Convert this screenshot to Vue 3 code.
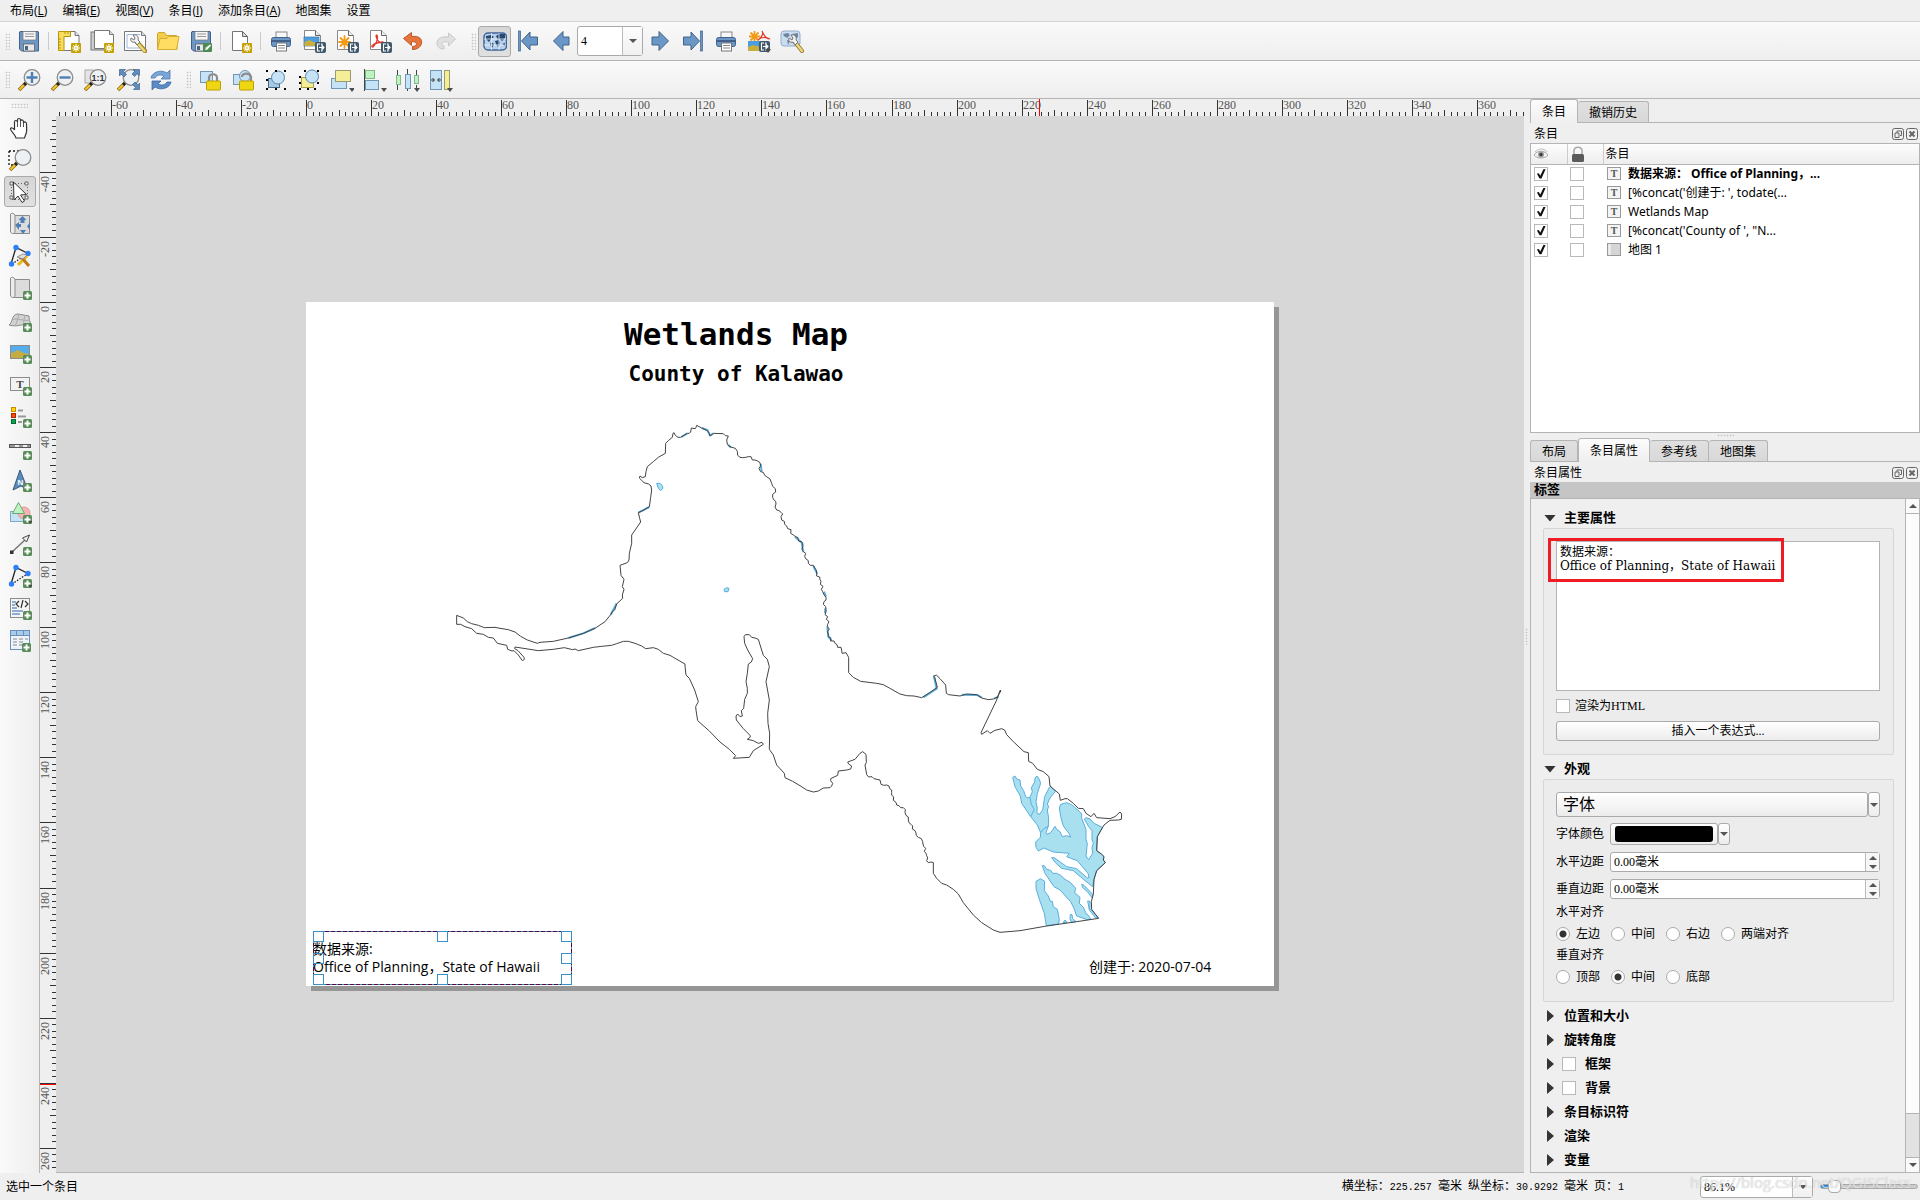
<template>
  <div class="window">
    <!-- shared icon shapes -->
    <svg class="sprite" aria-hidden="true">
      <symbol id="b-new" viewBox="0 0 10 10">
        <rect width="10" height="10" rx="1" fill="#c4a000" />
        <path d="M5 1v8M1 5h8M2.3 2.3l5.4 5.4M7.7 2.3L2.3 7.7" stroke="#fff" stroke-width="1.1" />
        <circle cx="5" cy="5" r="2" fill="#fff" /><circle cx="5" cy="5" r="1" fill="#e8d060" />
      </symbol>
      <symbol id="b-add" viewBox="0 0 9 9">
        <rect width="9" height="9" rx="1.5" fill="#5a8c5a" />
        <path d="M4.500 1.500v6M1.500 4.500h6" stroke="#fff" stroke-width="2" />
      </symbol>
      <symbol id="b-export" viewBox="0 0 11 11">
        <rect width="11" height="11" rx="2" fill="#415a6b" />
        <path d="M5 2H2.500v7H5M4 5.500h5M7 3.500l2 2-2 2M6 2h1v7H6" fill="none" stroke="#fff" stroke-width="1.100" />
      </symbol>
      <symbol id="b-drop" viewBox="0 0 6 4"><path d="M0 0h6L3 4z" fill="#4d4d4d" /></symbol>
      <symbol id="i-save" viewBox="0 0 24 24">
        <path d="M3 2.500h18l.5.5v19H4.500L2.500 20V3z" fill="#6d97c4" stroke="#41618a" />
        <rect x="6" y="2.500" width="13" height="8.500" fill="#f4f4f4" stroke="#777" stroke-width=".7" />
        <path d="M8 5h9M8 7.500h9" stroke="#999" />
        <rect x="6.500" y="15" width="11" height="7" fill="#e8e8e8" stroke="#555" stroke-width=".7" /><rect x="8" y="17" width="3" height="4" fill="#47668c" />
      </symbol>
      <symbol id="i-newlayout" viewBox="0 0 24 24">
        <path d="M6 2.500h12l4 4V21.500H6z" fill="#fff" stroke="#777" /><path d="M18 2.500v4h4" fill="#ddd" stroke="#777" />
        <path d="M1.500 2.500h12v5H7v14H1.500z" fill="#f5dd61" stroke="#b99505" />
        <path d="M2 10h2M2 13h2M2 16h2M2 19h2M8 3v2M11 3v2" stroke="#b99505" />
        <use href="#b-new" x="14" y="14" width="10" height="10" />
      </symbol>
      <symbol id="i-duplicate" viewBox="0 0 24 24">
        <rect x="1" y="3" width="17" height="18" fill="#ccc" stroke="#777" />
        <path d="M4.500 1.500h15l4 4v14h-19z" fill="#fff" stroke="#777" /><path d="M19.500 1.500v4h4" fill="#ddd" stroke="#777" />
        <use href="#b-new" x="14" y="14" width="10" height="10" />
      </symbol>
      <symbol id="i-manager" viewBox="0 0 24 24">
        <path d="M1.500 2.500h17l4 4v15h-21z" fill="#fff" stroke="#777" /><path d="M4 5.500h13M4 19h15M4 5.500V19" stroke="#9cb6dc" fill="none" /><path d="M18.500 2.500v4h4" fill="#ddd" stroke="#777" />
        <path d="M14 13l8 9" stroke="#a4862d" stroke-width="4.500" stroke-linecap="round" /><path d="M14.500 14l7 8" stroke="#edd87a" stroke-width="2.500" stroke-linecap="round" />
        <path d="M8 9l3 2 1-2-2-3c4-1 6 2 5 5l2 2-3 3-2-3c-3 1-5-1-4-4z" fill="#f2f2f2" stroke="#666" stroke-width=".9" />
      </symbol>
      <symbol id="i-open" viewBox="0 0 24 24">
        <path d="M1.500 20.500V4.500l1-1h6l2 3h10l.5 1v13z" fill="#f1cd49" stroke="#cfa62c" /><path d="M1.500 20.500l2.500-11h7l2-2h10l-2.500 13z" fill="#ffdd63" stroke="#d8ae33" />
      </symbol>
      <symbol id="i-saveas" viewBox="0 0 24 24">
        <use href="#i-save" width="24" height="24" /><rect x="14" y="14" width="9" height="9" rx="1" fill="#4e8a52" /><path d="M16 21l1-2.500 4-3 1 1-3.500 4z" fill="#fff" />
      </symbol>
      <symbol id="i-addpage" viewBox="0 0 24 24">
        <path d="M3.500 2.500h10l5 5v14h-15z" fill="#fff" stroke="#777" /><path d="M13.500 2.500v5h5z" fill="#ddd" stroke="#666" /><use href="#b-new" x="13" y="14" width="10" height="10" />
      </symbol>
      <symbol id="i-print" viewBox="0 0 24 24">
        <rect x="7" y="3" width="11" height="7" fill="#f8f8f8" stroke="#888" /><rect x="2.500" y="8.500" width="19" height="9" rx="2" fill="#6b97c6" stroke="#41618a" />
        <path d="M3 12h18" stroke="#41618a" stroke-width="2" /><rect x="7.500" y="14" width="10" height="8" fill="#fff" stroke="#777" /><path d="M9 16.500h7M9 19h7" stroke="#888" />
      </symbol>
      <symbol id="i-page" viewBox="0 0 24 24">
        <path d="M2.500 1.500h11l5 5v14h-16z" fill="#fff" stroke="#888" /><path d="M13.500 1.500v5h5" fill="#eee" stroke="#666" />
      </symbol>
      <symbol id="i-eximage" viewBox="0 0 24 24">
        <use href="#i-page" width="24" height="24" /><rect x="2" y="8" width="15" height="9" fill="#4b9fe0" stroke="#49739b" stroke-width=".7" />
        <path d="M2.500 17v-4l5-2 4 2 5 1v3z" fill="#c9ae3e" /><use href="#b-export" x="13" y="13" width="11" height="11" />
      </symbol>
      <symbol id="i-exsvg" viewBox="0 0 24 24">
        <use href="#i-page" width="24" height="24" />
        <path d="M9.500 7v12M4 13h11M5.500 9l8 8M13.500 9l-8 8" stroke="#f39b17" stroke-width="1.800" stroke-linecap="round" /><use href="#b-export" x="13" y="13" width="11" height="11" />
      </symbol>
      <symbol id="i-expdf" viewBox="0 0 24 24">
        <use href="#i-page" width="24" height="24" />
        <path d="M8 6c2 0 2 3 0 8l-3 4c-3 0 0-3 4-4l5-1c4 0 3 3-1 1-3-1-5-5-5-8" fill="none" stroke="#e43b2f" stroke-width="1.300" /><use href="#b-export" x="13" y="13" width="11" height="11" />
      </symbol>
      <symbol id="i-undo" viewBox="0 0 24 24">
        <path d="M2.500 9.500l8-6v4c8-1 11 3 10 7-1 4-5 6-9 6v-3c5 0 6-5-1-5v4z" fill="#e8743b" stroke="#b85a2b" />
      </symbol>
      <symbol id="i-redo" viewBox="0 0 24 24">
        <path d="M21.500 10l-7-6v4C7 7 3 10 3 14s3 6 7 6v-3c-4-1-3-5 4.500-4v4z" fill="#e0e0df" stroke="#c8c8c8" />
      </symbol>
      <symbol id="i-world" viewBox="0 0 24 24">
        <rect x="1" y="4" width="22.500" height="17" rx="4" fill="#b7d1ed" stroke="#3d649c" stroke-width="1.500" />
        <path d="M3 7l5-1 3 2-3 2-2 3-3-3zM8 13l3 2-2 4-2-3zM13 7l3-2h6v4l-3 3-2-2-2 1zM12 12l4-1 1 4-2 3-2-3zM19 15l3-1v3z" fill="#27486f" />
        <path d="M8.500 4v17M16 4v17M1 10h22M1 16h22" stroke="#e9f2fb" stroke-width=".8" />
      </symbol>
      <symbol id="i-prev" viewBox="0 0 24 24"><path d="M4.500 12L14 2.500V8h6v8h-6v5.500z" fill="#6b97c6" stroke="#41618a" /></symbol>
      <symbol id="i-next" viewBox="0 0 24 24"><path d="M20.500 12L11 2.500V8H4v8h7v5.500z" fill="#6b97c6" stroke="#41618a" /></symbol>
      <symbol id="i-first" viewBox="0 0 24 24"><rect x="2.500" y="2" width="2" height="20" fill="#6b97c6" stroke="#41618a" stroke-width=".7" /><path d="M5.500 12L14 3v5h7.500v8H14v5z" fill="#6b97c6" stroke="#41618a" /></symbol>
      <symbol id="i-last" viewBox="0 0 24 24"><rect x="19.500" y="2" width="2" height="20" fill="#6b97c6" stroke="#41618a" stroke-width=".7" /><path d="M18.500 12L10 3v5H2.500v8H10v5z" fill="#6b97c6" stroke="#41618a" /></symbol>
      <symbol id="i-exatlas" viewBox="0 0 24 24">
        <path d="M7.500 2v11M2 7.500h11M3.500 3.500l8 8M11.500 3.500l-8 8" stroke="#f39b17" stroke-width="1.800" /><path d="M15 2c2 3-1 7-4 9 3-3 8-3 12-1-4 0-6-3-8-8" fill="none" stroke="#e43b2f" stroke-width="1.200" />
        <rect x="1" y="12" width="13" height="10" fill="#4b9fe0" /><path d="M1 22v-4l5-2 8 2v4z" fill="#c9ae3e" /><use href="#b-export" x="12" y="12" width="11" height="11" /><use href="#b-drop" x="18" y="20" width="6" height="4" />
      </symbol>
      <symbol id="i-atlasset" viewBox="0 0 24 24">
        <g opacity=".65"><rect x="1" y="2" width="19" height="15" rx="3" fill="#b7d1ed" stroke="#5f86bb" /><path d="M3 5l5-1 2 2-3 3-3-2zM12 5l6-1v4l-4 3zM7 11l3 1-2 4z" fill="#27486f" /></g>
        <path d="M15 13l7 9" stroke="#8d7630" stroke-width="4" stroke-linecap="round" /><path d="M15 13l7 9" stroke="#edd87a" stroke-width="2.400" stroke-linecap="round" /><path d="M9 9l3 2 1-2-2-3c4-1 6 2 5 5l2 2-3 3-2-3c-3 1-5-1-4-4z" fill="#f2f2f2" stroke="#666" stroke-width=".9" />
      </symbol>
      <symbol id="i-lens" viewBox="0 0 24 24">
        <path d="M9 15l-7 7" stroke="#8a6a10" stroke-width="3.600" /><path d="M8 16l-5.500 5.500" stroke="#f6c52c" stroke-width="2" /><path d="M10 14l-3 3" stroke="#222" stroke-width="3" />
        <circle cx="15" cy="9.500" r="7.800" fill="#eef1f3" stroke="#8b8b8b" stroke-width="1.300" />
      </symbol>
      <symbol id="i-zoomin" viewBox="0 0 24 24"><use href="#i-lens" width="24" height="24" /><path d="M15 4v11M9.500 9.500h11" stroke="#4f7fb5" stroke-width="2.400" /></symbol>
      <symbol id="i-zoomout" viewBox="0 0 24 24"><use href="#i-lens" width="24" height="24" /><path d="M9.500 9.500h11" stroke="#4f7fb5" stroke-width="2.400" /></symbol>
      <symbol id="i-zoomone" viewBox="0 0 24 24"><rect x="2" y="2" width="8" height="13" fill="#e4e4e4" stroke="#aaa" /><use href="#i-lens" width="24" height="24" /><text x="15" y="13" font-size="9" font-weight="700" text-anchor="middle" fill="#333">1:1</text></symbol>
      <symbol id="i-zoomfull" viewBox="0 0 24 24">
        <use href="#i-lens" width="24" height="24" />
        <path d="M3.500 1.500h6l-2 2 3 3-2.500 2.500-3-3-1.500 2zM23.500 1.500v6l-2-2-3 3L16 6l3-3-2-1.500zM23.500 21.500h-6l2-2-3-3 2.500-2.500 3 3 1.500-2z" fill="#5e8dc0" stroke="#41618a" stroke-width=".7" />
      </symbol>
      <symbol id="i-refresh" viewBox="0 0 24 24">
        <path d="M2 10c1-6 10-9 16-5l3-3v9h-9l3-3c-4-2-7-1-9 2z" fill="#7aa7d8" stroke="#4b79ae" stroke-width=".8" /><path d="M22 14c-1 6-10 9-16 5l-3 3v-9h9l-3 3c4 2 7 1 9-2z" fill="#5b8cc6" stroke="#3c6ba3" stroke-width=".8" />
      </symbol>
      <symbol id="i-lock" viewBox="0 0 24 24">
        <rect x="2.500" y="3.500" width="12" height="11" fill="#c6e2f7" stroke="#7096b4" /><path d="M11 13V10c0-5 8-5 8 0v3" fill="none" stroke="#8d8d8d" stroke-width="2.200" /><rect x="8.500" y="13" width="14" height="9" rx="1" fill="#efd613" stroke="#bba000" />
      </symbol>
      <symbol id="i-unlock" viewBox="0 0 24 24">
        <rect x="2.500" y="6.500" width="11" height="10" fill="#c6e2f7" stroke="#7096b4" /><circle cx="14" cy="8" r="5.500" fill="#c6e2f7" stroke="#7096b4" /><path d="M11 9c0-4 8-5 9 0v4" fill="none" stroke="#8d8d8d" stroke-width="2.200" /><rect x="8.500" y="13" width="14" height="9" rx="1" fill="#efd613" stroke="#bba000" />
      </symbol>
      <symbol id="i-group" viewBox="0 0 24 24">
        <rect x="4.500" y="10.500" width="11" height="9" fill="#a8c8e0" stroke="#40688a" /><circle cx="14" cy="9.500" r="6.500" fill="#c6e2f7" stroke="#5b88ab" />
        <path d="M2 2h2v2H2zM11 2h2v2h-2zM20 2h2v2h-2zM2 20h2v2H2zM11 20h2v2h-2zM20 20h2v2h-2zM2 11h2v2H2z" />
      </symbol>
      <symbol id="i-ungroup" viewBox="0 0 24 24">
        <rect x="4.500" y="9.500" width="12" height="10" fill="#f4ee98" stroke="#aaa23d" /><circle cx="15" cy="8.500" r="6.500" fill="#c6e2f7" stroke="#5b88ab" />
        <path d="M7 2h2v2H7zM20 2h2v2h-2zM2 8h2v2H2zM2 20h2v2H2zM10 20h2v2h-2zM17 20h2v2h-2zM20 14h2v2h-2zM2 14h2v2H2z" />
      </symbol>
      <symbol id="i-raise" viewBox="0 0 24 24"><rect x="1.500" y="10.500" width="15" height="10" fill="#c6e2f7" stroke="#7096b4" /><rect x="5.500" y="2.500" width="15" height="11" fill="#f4ee98" stroke="#9d9a70" /><use href="#b-drop" x="19" y="20" width="6" height="4" /></symbol>
      <symbol id="i-align" viewBox="0 0 24 24"><path d="M1.500 1v22" stroke="#444" /><rect x="2.500" y="2.500" width="9" height="8" fill="#bdf3c2" stroke="#83b689" /><rect x="2.500" y="12.500" width="13" height="9" fill="#c6e2f7" stroke="#7096b4" /><use href="#b-drop" x="18" y="20" width="6" height="4" /></symbol>
      <symbol id="i-spread" viewBox="0 0 24 24"><path d="M1.500 2v6M11.500 1v6M20.500 2v6M1.500 17v5M11.500 20v3M20.500 17v3" stroke="#444" /><rect x=".5" y="7.500" width="4" height="9" fill="#bdf3c2" stroke="#83b689" /><rect x="9.500" y="6.500" width="5" height="14" fill="#c6e2f7" stroke="#7096b4" /><rect x="18.500" y="7.500" width="4" height="8" fill="#bdf3c2" stroke="#83b689" /><use href="#b-drop" x="18" y="20" width="6" height="4" /></symbol>
      <symbol id="i-resize" viewBox="0 0 24 24"><rect x="1.500" y="2.500" width="11" height="19" fill="#c6e2f7" stroke="#7096b4" /><rect x="15.500" y="2.500" width="5" height="19" fill="#f4ee98" stroke="#9d9a70" /><path d="M2 12h3M3.500 10l2 2-2 2M12 12H9M10.500 10l-2 2 2 2" fill="none" stroke="#333" /><use href="#b-drop" x="18" y="20" width="6" height="4" /></symbol>
      <symbol id="i-hand" viewBox="0 0 24 24">
        <path d="M8 22c-1-4-5-6-5.500-9 0-2 3-1 4 1V6c0-2 2.500-2 3 0V4c0-2 3-2 3 0v1c1-2 3-1 3 1v1c1-2 3-1 3 1 0 5 1 8-1 11l-1 3z" fill="#fff" stroke="#333" stroke-width="1.200" /><path d="M9.500 6v5M12.500 5v6M15.500 7v4" stroke="#555" />
      </symbol>
      <symbol id="i-zoom" viewBox="0 0 24 24"><path d="M1 3h14M1 3v14h10" fill="none" stroke="#111" stroke-width="1.300" stroke-dasharray="2 2" /><use href="#i-lens" width="24" height="24" /></symbol>
      <symbol id="i-select" viewBox="0 0 24 24">
        <path d="M4 3.500h14M4 19.500h14M3.500 4v14M19.500 4v14" stroke="#666" stroke-dasharray="1 2" /><path d="M2 2h3v3H2zM17 2h3v3h-3zM2 16h3v3H2zM17 16h3v3h-3z" fill="#eee" stroke="#666" />
        <path d="M5.500 2l13 12.500-6 .5 4 6-2.500 1.500-4-6.500-4 4z" fill="#fff" stroke="#333" />
      </symbol>
      <symbol id="i-map" viewBox="0 0 24 24"><path d="M5 3.500h16.500v18H5z" fill="#dcdcdc" stroke="#8b8b8b" /><path d="M2.500 2v18c1 2 4 2 4.500 0V3c-1-2-4-2-4.500-1z" fill="#ececec" stroke="#8b8b8b" /></symbol>
      <symbol id="i-move" viewBox="0 0 24 24"><use href="#i-map" width="24" height="24" /><path d="M14.500 4l4 4h-2v3h-4V8h-2zM7 13l4-3v2h2v3h-2v3zM22 10v8l-3-3.500zM12 18h6l-3 4z" fill="#4f7fb5" /></symbol>
      <symbol id="i-node" viewBox="0 0 24 24"><path d="M3 20L8 3.500l12 6" fill="none" stroke="#222" stroke-width="1.300" /><path d="M4 20L19 10" stroke="#222" stroke-width="1.300" stroke-dasharray="1.500 1.500" /><circle cx="8" cy="3.500" r="2.700" fill="#2d7ff9" /><circle cx="20" cy="9.500" r="2.700" fill="#2d7ff9" /><circle cx="3.500" cy="20" r="2.700" fill="#2d7ff9" /></symbol>
      <symbol id="i-editnode" viewBox="0 0 24 24"><use href="#i-node" width="24" height="24" /><path d="M10 21l9-9" stroke="#e9b91d" stroke-width="3" /><path d="M14 14l7 8" stroke="#bd7a18" stroke-width="3" /><path d="M9 13l6-3 4 1-4 4-3-1z" fill="#ddd" stroke="#777" stroke-width=".7" /></symbol>
      <symbol id="i-addmap" viewBox="0 0 24 24"><use href="#i-map" width="24" height="24" /><use href="#b-add" x="15" y="15" width="9" height="9" /></symbol>
      <symbol id="i-add3d" viewBox="0 0 24 24"><path d="M1 17c4-2 2-11 9-11l11 2c0 4 1 5 2 9-6-3-12 3-22 0z" fill="#d2d2d2" stroke="#8b8b8b" /><path d="M4 12c5-3 12 2 18 0M11 6c-1 4-2 8-4 12M17 7c-1 4-1 7-2 10" fill="none" stroke="#aaa" /><use href="#b-add" x="15" y="15" width="9" height="9" /></symbol>
      <symbol id="i-addimage" viewBox="0 0 24 24"><rect x="2.500" y="5.500" width="19" height="13" fill="#56adeb" stroke="#8b8b8b" /><path d="M3 18v-5l7-3 6 3 5 1v4z" fill="#c4ac42" /><use href="#b-add" x="15" y="15" width="9" height="9" /></symbol>
      <symbol id="i-addlabel" viewBox="0 0 24 24"><rect x="2.500" y="5.500" width="19" height="13" fill="#f2f2f2" stroke="#8b8b8b" /><text x="12" y="16" font-family="Liberation Serif, serif" font-size="11" font-weight="700" text-anchor="middle" fill="#444">T</text><use href="#b-add" x="15" y="15" width="9" height="9" /></symbol>
      <symbol id="i-addlegend" viewBox="0 0 24 24"><rect x="3.500" y="3.500" width="4" height="4" fill="#ffd500" stroke="#c98b00" /><rect x="3.500" y="9.500" width="4" height="4" fill="#ff4a0b" stroke="#a52a00" /><rect x="3.500" y="15.500" width="4" height="4" fill="#08a551" stroke="#046a32" /><path d="M10 6.500h5M10 12.500h8M10 18h4" stroke="#999" stroke-width="2" /><use href="#b-add" x="15" y="15" width="9" height="9" /></symbol>
      <symbol id="i-addscale" viewBox="0 0 24 24"><rect x="1.500" y="8.500" width="21" height="3" fill="#eee" stroke="#555" /><path d="M2 10h5M11 10h4M19 10h3" stroke="#999" stroke-width="2" /><use href="#b-add" x="15" y="15" width="9" height="9" /></symbol>
      <symbol id="i-addnorth" viewBox="0 0 24 24"><path d="M12 2l8 20-7-4-8 4z" fill="#5d8cba" stroke="#38597f" /><text x="12.500" y="17" font-size="8" font-weight="700" text-anchor="middle" fill="#fff">N</text><use href="#b-add" x="15" y="15" width="9" height="9" /></symbol>
      <symbol id="i-addshape" viewBox="0 0 24 24"><rect x="2.500" y="11.500" width="14" height="10" fill="#c6e2f7" stroke="#7fa9c8" /><circle cx="16" cy="13" r="6" fill="#f7b3b0" stroke="#d99" /><path d="M10.500 2.500l6 11H4.500z" fill="#bdf3c2" stroke="#6ca873" /><use href="#b-add" x="15" y="15" width="9" height="9" /><use href="#b-drop" x="20" y="21" width="5" height="3" /></symbol>
      <symbol id="i-addarrow" viewBox="0 0 24 24"><path d="M4 20L18 7" stroke="#777" stroke-width="1.500" /><path d="M21.500 3l-7 3 4 4z" fill="#eee" stroke="#444" /><rect x="2" y="18.500" width="3.500" height="3.500" fill="#333" /><use href="#b-add" x="15" y="15" width="9" height="9" /></symbol>
      <symbol id="i-addnode" viewBox="0 0 24 24"><use href="#i-node" width="24" height="24" /><use href="#b-add" x="15" y="15" width="9" height="9" /><use href="#b-drop" x="20" y="21" width="5" height="3" /></symbol>
      <symbol id="i-addhtml" viewBox="0 0 24 24"><rect x="2.500" y="2.500" width="19" height="19" fill="#f5f5f5" stroke="#8b8b8b" /><path d="M4 6h4M4 9h3M4 12h5M4 15h11M4 18h8" stroke="#6b97c6" stroke-width="1.600" /><path d="M11 5l-3 3 3 3M17 5l3 3-3 3M15 4l-2 8" fill="none" stroke="#333" stroke-width="1.200" /><use href="#b-add" x="15" y="15" width="9" height="9" /></symbol>
      <symbol id="i-addtable" viewBox="0 0 24 24"><rect x="2.500" y="2.500" width="19" height="19" fill="#eef4fa" stroke="#6790bc" /><path d="M3 5h18" stroke="#a9cbea" stroke-width="4" /><path d="M3 7.500h18M8.500 3v4M15.500 3v4" stroke="#6790bc" /><path d="M5 11h4M11 11h4M17 11h3M5 14h4M11 14h4M5 17h4M11 17h3" stroke="#888" /><use href="#b-add" x="14" y="15" width="9" height="9" /></symbol>
    </svg>

    <nav class="menubar">
      <button v-for="m in menus" :key="m.text" type="button">{{ m.text }}<template v-if="m.key">(<u>{{ m.key }}</u>)</template></button>
    </nav>

    <div class="toolbar">
      <div class="bar-group">
        <i class="grip"></i>
        <template v-for="(icon, i) in fileTools" :key="i">
          <i v-if="icon === '|'" class="sep"></i>
          <button v-else type="button" class="tool" :aria-label="icon"><svg><use :href="'#i-' + icon" /></svg></button>
        </template>
      </div>
      <div class="bar-group">
        <i class="grip"></i>
        <button v-for="icon in ['world', 'first', 'prev']" :key="icon" type="button" class="tool" :class="{ active: icon === 'world' }" :aria-label="icon"><svg><use :href="'#i-' + icon" /></svg></button>
        <span class="combo page-combo">
          <select v-model="atlasPage" aria-label="page"><option>4</option></select>
          <i class="combo-arrow"></i>
        </span>
        <button v-for="icon in ['next', 'last', 'print', 'exatlas', 'atlasset']" :key="icon" type="button" class="tool" :aria-label="icon"><svg><use :href="'#i-' + icon" /></svg></button>
      </div>
    </div>
    <div class="toolbar">
      <div v-for="(group, g) in viewTools" :key="g" class="bar-group">
        <i class="grip"></i>
        <button v-for="icon in group" :key="icon" type="button" class="tool" :aria-label="icon"><svg><use :href="'#i-' + icon" /></svg></button>
      </div>
    </div>

    <div class="body">
      <aside class="toolbox">
        <i class="grip flat"></i>
        <button v-for="icon in boxTools" :key="icon" type="button" class="tool" :class="{ active: icon === 'select' }" :aria-label="icon"><svg><use :href="'#i-' + icon" /></svg></button>
      </aside>

      <main class="view">
        <svg class="ruler-h">
          <path :d="hPath" />
          <text v-for="t in hLabels" :key="t.mm" :x="t.pos + 1" y="10">{{ t.mm }}</text>
          <path class="cursor" d="M983.500 0v17" />
        </svg>
        <svg class="ruler-v">
          <path :d="vPath" />
          <text v-for="t in vLabels" :key="t.mm" :transform="`translate(9 ${t.pos + 4}) rotate(-90)`" text-anchor="end">{{ t.mm }}</text>
          <path class="cursor" d="M0 968.500h16" />
        </svg>
        <div class="canvas">
          <div class="page">
            <svg class="map" viewBox="-402 -324 2904 2052">
              <g class="wet">
                <polygon v-for="(w, i) in wetlands" :key="i" :points="w" />
                <path class="seam" d="M1770 1162l4 22 9 14-11 22M1802 1268l10-12 14-8" />
                <path class="shore" d="M385 684l45-14 35-16M512 614l18-34M595 308l33-17M742 70l-18 11M785 54l17 6 8 16 10-5M865 104l8 9M962 162l3 22M1065 380l20 18 5 28M1120 468l12 24M1152 545l6 15M1156 595l-1 14M1162 650l3 30 10 12M1450 862l40-26-8-36M1566 854l46 1 14 8M1662 866l14-6" />
              </g>
              <polyline v-for="(c, i) in coast" :key="i" class="outline" :points="c" />
            </svg>
            <div class="label title">Wetlands Map</div>
            <div class="label subtitle">County of Kalawao</div>
            <div class="label created">创建于: 2020-07-04</div>
            <div class="label source">
              数据来源:<br />Office of Planning，State of Hawaii
              <svg class="handles">
                <rect width="258" height="53" />
                <rect class="dash" width="258" height="53" />
                <rect v-for="h in handles" :key="h.x + '-' + h.y" :x="h.x" :y="h.y" width="10" height="10" />
              </svg>
            </div>
          </div>
        </div>
      </main>

      <i class="grip split-v"></i>

      <aside class="docks">
        <section class="dock">
          <div class="tabs">
            <button type="button" class="tab on">条目</button>
            <button type="button" class="tab">撤销历史</button>
          </div>
          <header class="dock-title">条目
            <span class="dock-btns">
              <button type="button" aria-label="float"><svg viewBox="0 0 12 12"><rect x=".5" y=".5" width="11" height="11" rx="2" /><path d="M5 5V3h4.500v4.500H8M3 5h4v4.500H3z" /></svg></button>
              <button type="button" aria-label="close"><svg viewBox="0 0 12 12"><rect x=".5" y=".5" width="11" height="11" rx="2" /><path class="thick" d="M3.500 3.500l5 5M8.500 3.500l-5 5" /></svg></button>
            </span>
          </header>
          <div class="tree">
            <table>
              <thead>
                <tr>
                  <th class="narrow"><svg class="head-icon" viewBox="0 0 16 16"><path d="M1 9c3-5 11-5 14 0-3 4-11 4-14 0z" fill="#f2f2f2" stroke="#aaa" /><path d="M2 6c4-4 9-4 12 0" fill="none" stroke="#bbb" /><circle cx="8" cy="8.500" r="3" fill="#999" /><circle cx="8" cy="8.500" r="1.500" fill="#333" /></svg></th>
                  <th class="narrow"><svg class="head-icon" viewBox="0 0 16 16"><path d="M4 9V5c0-5 8-5 8 0v4" fill="none" stroke="#aaa" stroke-width="1.600" /><rect x="2" y="8" width="12" height="8" rx="1.500" fill="#5b5b5b" /></svg></th>
                  <th>条目</th>
                </tr>
              </thead>
              <tbody>
                <tr v-for="(item, i) in items" :key="i" :class="{ current: i === 0 }">
                  <td><input v-model="item.visible" type="checkbox" class="check" :aria-label="'visible ' + item.name" /></td>
                  <td><input v-model="item.locked" type="checkbox" class="check" :aria-label="'locked ' + item.name" /></td>
                  <td>
                    <div class="item-name">
                      <svg viewBox="0 0 14 13">
                        <template v-if="item.type === 'label'"><rect x=".5" y=".5" width="13" height="12" fill="#f4f4f4" stroke="#999" /><text x="7" y="10" font-family="Liberation Serif, serif" font-size="10" font-weight="700" text-anchor="middle" fill="#555">T</text></template>
                        <template v-else><rect x=".5" y=".5" width="13" height="12" fill="#d5d5d5" stroke="#999" /><path d="M2.500 1v11" stroke="#f4f4f4" stroke-width="2" /></template>
                      </svg>
                      <span>{{ item.name }}</span>
                    </div>
                  </td>
                </tr>
              </tbody>
            </table>
          </div>
        </section>
        <i class="grip flat split-h"></i>
        <section class="dock props">
          <div class="tabs">
            <button v-for="t in ['布局', '条目属性', '参考线', '地图集']" :key="t" type="button" class="tab" :class="{ on: t === '条目属性' }">{{ t }}</button>
          </div>
          <header class="dock-title">条目属性
            <span class="dock-btns">
              <button type="button" aria-label="float"><svg viewBox="0 0 12 12"><rect x=".5" y=".5" width="11" height="11" rx="2" /><path d="M5 5V3h4.500v4.500H8M3 5h4v4.500H3z" /></svg></button>
              <button type="button" aria-label="close"><svg viewBox="0 0 12 12"><rect x=".5" y=".5" width="11" height="11" rx="2" /><path class="thick" d="M3.500 3.500l5 5M8.500 3.500l-5 5" /></svg></button>
            </span>
          </header>
          <h2 class="caption">标签</h2>
          <div class="scroll">
            <div class="form">
              <button type="button" class="fold open">主要属性</button>
              <div class="box">
                <textarea v-model="source" aria-label="主要属性" spellcheck="false"></textarea>
                <i class="mark"></i>
                <label class="tick"><input v-model="html" type="checkbox" class="check" />渲染为HTML</label>
                <button type="button" class="push">插入一个表达式...</button>
              </div>
              <button type="button" class="fold open">外观</button>
              <div class="box look">
                <div class="split font">
                  <button type="button" class="push">字体</button>
                  <button type="button" class="push arrow" aria-label="字体菜单"></button>
                </div>
                <div class="row color">
                  <label for="color">字体颜色</label>
                  <div class="split">
                    <button id="color" type="button" class="push swatch"><i></i></button>
                    <button type="button" class="push arrow" aria-label="颜色菜单"></button>
                  </div>
                </div>
                <div v-for="m in margins" :key="m.id" class="row">
                  <label :for="m.id">{{ m.label }}</label>
                  <div class="spin">
                    <input :id="m.id" v-model="m.value" type="text" />
                    <span><button type="button" class="up" aria-label="增加"></button><button type="button" class="down" aria-label="减少"></button></span>
                  </div>
                </div>
                <template v-for="a in aligns" :key="a.id">
                  <div class="line">{{ a.label }}</div>
                  <div class="radios">
                    <label v-for="o in a.options" :key="o"><input v-model="a.value" type="radio" :name="a.id" :value="o" />{{ o }}</label>
                  </div>
                </template>
              </div>
              <div v-for="s in sections" :key="s.text" class="folded">
                <button type="button" class="fold" :aria-label="s.text"></button>
                <label v-if="s.check"><input type="checkbox" class="check" />{{ s.text }}</label>
                <span v-else>{{ s.text }}</span>
              </div>
            </div>
            <div class="vbar">
              <button type="button" class="up" aria-label="up"></button>
              <i class="thumb"></i>
              <i class="groove"></i>
              <button type="button" class="down" aria-label="down"></button>
            </div>
          </div>
        </section>
      </aside>
    </div>

    <footer class="status">
      <span class="hint">选中一个条目</span>
      <span class="coords">横坐标：<b>225.257&nbsp;</b>毫米<b>&nbsp;</b>纵坐标：<b>30.9292&nbsp;</b>毫米<b>&nbsp;</b>页：<b>1</b></span>
      <span class="combo zoom-combo">
        <select v-model="zoom" aria-label="zoom"><option>86.1%</option></select>
        <i class="combo-arrow"></i>
      </span>
      <input v-model="slider" class="slider" type="range" min="0" max="100" aria-label="zoom slider" />
      <span class="watermark">https://blog.csdn.net/QGISClass</span>
    </footer>
  </div>
</template>

<script setup>
import { ref, reactive } from 'vue'

const menus = [
  { text: '布局', key: 'L' },
  { text: '编辑', key: 'E' },
  { text: '视图', key: 'V' },
  { text: '条目', key: 'I' },
  { text: '添加条目', key: 'A' },
  { text: '地图集' },
  { text: '设置' }
]

const fileTools = ['save', '|', 'newlayout', 'duplicate', 'manager', 'open', 'saveas', '|', 'addpage', '|', 'print', 'eximage', 'exsvg', 'expdf', 'undo', 'redo']
const viewTools = [
  ['zoomin', 'zoomout', 'zoomone', 'zoomfull', 'refresh'],
  ['lock', 'unlock', 'group', 'ungroup', 'raise', 'align', 'spread', 'resize']
]
const boxTools = ['hand', 'zoom', 'select', 'move', 'editnode', 'addmap', 'add3d', 'addimage', 'addlabel', 'addlegend', 'addscale', 'addnorth', 'addshape', 'addarrow', 'addnode', 'addhtml', 'addtable']

const atlasPage = ref('4')
const zoom = ref('86.1%')
const slider = ref(9)
const html = ref(false)
const source = ref('数据来源：\nOffice of Planning，State of Hawaii')

const items = reactive([
  { name: '数据来源： Office of Planning，...', type: 'label', visible: true, locked: false },
  { name: "[%concat('创建于: ', todate(...", type: 'label', visible: true, locked: false },
  { name: 'Wetlands Map', type: 'label', visible: true, locked: false },
  { name: "[%concat('County of ', \"N...", type: 'label', visible: true, locked: false },
  { name: '地图 1', type: 'map', visible: true, locked: false }
])

const margins = reactive([
  { id: 'mx', label: '水平边距', value: '0.00毫米' },
  { id: 'my', label: '垂直边距', value: '0.00毫米' }
])

const aligns = reactive([
  { id: 'ah', label: '水平对齐', value: '左边', options: ['左边', '中间', '右边', '两端对齐'] },
  { id: 'av', label: '垂直对齐', value: '中间', options: ['顶部', '中间', '底部'] }
])

const sections = [
  { text: '位置和大小' },
  { text: '旋转角度' },
  { text: '框架', check: true },
  { text: '背景', check: true },
  { text: '条目标识符' },
  { text: '渲染' },
  { text: '变量' }
]

const handles = [0, 124, 248].flatMap(x => [0, 22, 43].map(y => ({ x, y })))
  .filter(h => !(h.x === 124 && h.y === 22))

// pixels per millimetre at the current zoom
const scale = 3.2528

function ticks(origin, from, to) {
  const out = []
  for (let mm = from; mm <= to; mm += 2) {
    out.push({ mm, pos: Math.round(origin + mm * scale) })
  }
  return out
}

function tickLength(mm, full) {
  if (mm % 20 === 0) return full
  return mm % 10 === 0 ? 6 : 4
}

const hTicks = ticks(250, -76, 374)
const vTicks = ticks(186, -56, 266)
const hPath = hTicks.map(t => `M${t.pos + 0.5} 17v-${tickLength(t.mm, 16)}`).join('')
const vPath = vTicks.map(t => `M16 ${t.pos + 0.5}h-${tickLength(t.mm, 16)}`).join('')
const hLabels = hTicks.filter(t => t.mm % 20 === 0)
const vLabels = vTicks.filter(t => t.mm % 20 === 0)

// "x,y x,y ..." moved by dx, dy; rough adds a small zigzag between the points
function trace(str, dx = 0, dy = 0, rough = 0) {
  const pts = str.trim().split(/\s+/).map(p => p.split(',').map(Number)).map(([x, y]) => [x + dx, y + dy])
  if (!rough) return pts.join(' ')
  const out = []
  let n = 0
  pts.forEach(([x, y], i) => {
    out.push([x, y])
    const next = pts[i + 1]
    if (!next) return
    const len = Math.hypot(next[0] - x, next[1] - y)
    const steps = Math.floor(len / 7)
    for (let s = 1; s < steps; s++) {
      const k = s / steps
      const side = Math.sin(++n * 2.3) * rough
      out.push([
        Math.round(x + (next[0] - x) * k - (next[1] - y) / len * side),
        Math.round(y + (next[1] - y) * k + (next[0] - x) / len * side)
      ])
    }
  })
  return out.join(' ')
}

const coast = [
  // west tip and the peninsula
  trace(`50,643 50,616 70,624 82,635 95,641 115,646 133,653 165,652 180,655 205,659 225,666 242,679 262,690 292,700 300,697 340,694 385,684
    430,670 465,655 495,635 512,614 518,604 524,600 530,582 548,565 547,555 552,538 547,530 552,508 543,496 540,466 562,458 567,450 568,430 575,400 575,375
    602,336 599,325 595,308 612,300 628,290 632,262 635,240 633,228 626,222 612,218 598,204 600,198 607,203 616,200 618,185 622,170 640,155 655,142
    676,130 677,100 685,92 697,82 699,70 702,68 706,76 714,82 722,82 742,70 748,70 752,66 754,54 766,56 768,52 770,46 785,54 802,62 808,70 810,78 820,70 850,71 856,77 865,78`),
  // north-east shore
  trace(`865,78 860,90 862,102 876,112 892,124 893,136 908,143 925,140 945,150 960,158 962,185 980,200 990,207 995,220 1006,236 998,262
    1008,282 1010,300 1028,312 1025,330 1040,348 1060,375 1085,395 1090,425 1105,460 1120,466 1130,490 1143,515 1148,545 1158,562 1152,575 1158,606 1155,614 1163,620 1165,680 1185,700 1205,720 1206,730 1218,728`, 0, 0, 4),
  trace(`138,638 146,652 146,698 160,712 182,724 230,730 250,734 268,744 300,762 320,767 342,768 365,773 392,756 412,742 404,712 400,708 410,706 420,716 437,735 439,760
    446,764 480,768 500,762 530,764 545,774 565,779 580,777 592,771 603,752 600,751 590,780 543,878 545,883 562,872 570,880 585,871 605,866 614,870 620,884 640,905 672,935 685,938 686,964
    698,970 712,988 730,995 747,1010 750,1038 778,1062 781,1081 795,1076 802,1076 820,1090 835,1105 850,1106 858,1120 873,1130 882,1120 890,1133 930,1136 945,1130 960,1116 965,1122 964,1138 955,1140 930,1141
    912,1155 892,1190 890,1232 904,1242 912,1250 910,1260 916,1268 890,1292 882,1318 880,1362 874,1385 875,1408 896,1435 830,1445 740,1458 660,1472 600,1477
    580,1470 545,1448 520,1425 490,1388 475,1362 460,1348 440,1335 425,1330 410,1315 400,1300 400,1268`, 1080, 90),
  trace(`400,1268 385,1268 378,1240 368,1205 355,1192 325,1140 310,1103 290,1095 275,1065 275,1050 260,1035 243,1033 240,1020 222,1016 200,1004`, 1080, 90, 3),
  trace(`200,1004 195,975 199,968 198,943 188,935 180,940 165,958 143,966 146,972 155,978 152,987 140,990 115,993 113,1006 92,1016 92,1022 98,1030 95,1038 90,1043 70,1044
    55,1053 40,1056 20,1050 0,1037 -22,1024 -45,1013 -47,1000 -70,975 -80,945 -92,928 -91,880 -96,850 -97,820 -92,780 -102,725 -92,680 -98,658 -110,646 -125,598 -135,594`, 1080, 90),
  // inner valley and the south shore
  trace(`945,684 935,682 928,674 916,674 912,680 914,700 923,720 938,746 934,756 925,762 922,790 918,815 922,835 922,850 914,868 911,895 904,902 907,918 900,920 893,912 888,918 889,930 910,956 930,976 931,981 922,988
    940,992 955,1000 966,997 970,1003 940,1022 928,1042 880,1045 887,1037 868,1018 840,996 808,963 773,932 768,900 767,890 775,875 764,840 748,805 738,795 735,768 735,762 700,742 690,736 670,730 655,718 640,713 617,716
    605,708 585,700 565,694 550,694 530,701 515,706 485,709 460,712 415,722 405,717 398,719 373,713 340,718 295,722 225,711 224,716 234,722 252,742 253,748 247,752 235,735 222,722 216,723 203,718 200,706 172,700 160,684 145,682 130,673 110,670 95,656 75,650 62,643 50,643`)
]

const wetlands = [
  trace('650,220 660,220 666,226 669,234 662,242 655,235'),
  trace('852,538 860,533 867,535 864,545 854,545'),
  ...[
    `638,1012 645,1008 650,1017 660,1020 662,1038 671,1052 677,1070 684,1074 691,1070 697,1055 694,1043 704,1026 705,1014 711,1008 718,1018 722,1030 712,1060 708,1085 712,1105 710,1118 718,1123
      728,1110 734,1070 748,1042 752,1040 766,1054 750,1074 742,1092 746,1100 742,1110 746,1135 745,1158 738,1178 741,1183 752,1178 765,1159 770,1168 780,1175 787,1190 800,1187 812,1191 808,1182 790,1158 782,1130 778,1104 782,1093 800,1088 815,1094 838,1114
      845,1122 845,1135 858,1168 858,1200 862,1210 858,1248 866,1259 878,1240 876,1222 880,1210 876,1198 876,1172 866,1160 853,1137 858,1133 870,1137 882,1150 907,1162 892,1190 890,1232 904,1242 912,1250 910,1260 916,1268 890,1292 882,1318 878,1340 850,1318
      820,1292 785,1285 766,1268 755,1253 762,1253 778,1264 800,1280 830,1286 862,1314 867,1312 864,1300 832,1262 815,1256 800,1250 808,1240 760,1236 732,1224 715,1233 708,1222 707,1206 721,1192 722,1178 712,1155 692,1130 684,1118 665,1090 661,1068 645,1040`,
    '727,1277 733,1277 740,1288 752,1291 758,1300 770,1300 782,1306 795,1318 812,1328 827,1345 824,1358 840,1372 838,1390 850,1402 857,1418 868,1430 872,1438 862,1439 830,1428 822,1405 812,1385 780,1350 762,1340 735,1300',
    '708,1324 722,1316 734,1324 733,1352 745,1368 751,1384 757,1384 760,1400 772,1408 778,1438 776,1452 739,1457 733,1420 718,1378 708,1345',
    '845,1333 852,1336 878,1363 876,1373 862,1355 848,1343',
    '863,1383 870,1384 870,1406 894,1433 887,1434 868,1410',
    '811,1423 816,1424 818,1436 828,1445 814,1447 810,1436',
    '789,1448 795,1440 801,1447'
  ].map(s => trace(s, 1080, 90))
]
</script>

<style>
body {
  margin: 0;
}
</style>

<style scoped>
.window {
  display: flex;
  flex-direction: column;
  height: 100vh;
  overflow: hidden;
  background: #efefef;
  color: #000;
  font: 12px/16px "Liberation Serif", "Noto Sans CJK SC", sans-serif;
}

* {
  box-sizing: border-box;
}

button,
input,
select,
textarea {
  margin: 0;
  padding: 0;
  border: 0;
  border-radius: 0;
  background: none;
  color: inherit;
  font: inherit;
  outline: none;
}

.sprite {
  display: none;
}

.menubar {
  display: flex;
  flex: none;
  gap: 15px;
  height: 22px;
  padding: 0 10px;
  border-bottom: 1px solid #d3d3d3;
  font-family: "Open Sans", "Noto Sans CJK SC", sans-serif;
}

.toolbar {
  display: flex;
  flex: none;
  gap: 4px;
  height: 39px;
  border-bottom: 1px solid #b4b4b4;
  background: linear-gradient(#fafafa, #eee);
}

.toolbar + .toolbar {
  height: 38px;
}

.bar-group {
  display: flex;
  align-items: center;
}

.grip {
  flex: none;
  width: 5px;
  height: 17px;
  margin: 0 2px 0 5px;
  background: radial-gradient(#c4c4c4 40%, transparent 50%) 0 0 / 3px 3px;
}

.grip.flat {
  width: 17px;
  height: 5px;
}

.sep {
  width: 1px;
  height: 18px;
  margin: 0 3px;
  background: #ccc;
}

.tool {
  display: flex;
  flex: none;
  align-items: center;
  justify-content: center;
  width: 33px;
  height: 31px;
  border: 1px solid transparent;
  border-radius: 3px;
  font-family: "Liberation Sans", sans-serif;
}

.tool.active {
  border-color: #aaa;
  background: linear-gradient(#d6d6d6, #e0e0e0);
}

.tool svg {
  width: 24px;
  height: 24px;
}

.combo {
  display: flex;
  border: 1px solid #aaa;
  border-radius: 3px;
  background: #fff;
}

.combo select {
  flex: 1;
  min-width: 0;
  padding-left: 3px;
  appearance: none;
}

.combo-arrow {
  display: flex;
  align-items: center;
  justify-content: center;
  width: 20px;
  border-left: 1px solid #bbb;
  background: linear-gradient(#fdfdfd, #f0f0f0);
}

.combo-arrow::after,
.arrow::after,
.down::after {
  content: "";
  border: 4px solid transparent;
  border-top-color: #555;
  border-bottom: 0;
}

.up::after {
  content: "";
  border: 4px solid transparent;
  border-bottom-color: #555;
  border-top: 0;
}

.page-combo {
  width: 66px;
  height: 30px;
}

.body {
  display: flex;
  flex: 1;
  min-height: 0;
}

.toolbox {
  display: flex;
  flex: none;
  flex-direction: column;
  align-items: center;
  gap: 1px;
  width: 40px;
  padding-top: 4px;
  border-right: 1px solid #b4b4b4;
  background: linear-gradient(90deg, #fafafa, #eee);
}

.toolbox .grip {
  margin: 0 0 3px;
}

.toolbox .tool {
  width: 32px;
}

.view {
  display: grid;
  flex: 1;
  grid-template: 17px 1fr / 16px 1fr;
  min-width: 0;
}

.ruler-h,
.ruler-v {
  width: 100%;
  height: 100%;
  fill: #555;
  stroke: #333;
  shape-rendering: crispEdges;
}

.ruler-h {
  grid-column: 2;
}

.ruler-v {
  grid-row: 2;
}

.view text {
  stroke: none;
}

.view .cursor {
  stroke: #f00;
}

.canvas {
  display: flex;
  align-items: center;
  justify-content: center;
  min-width: 0;
  min-height: 0;
  border-bottom: 1px solid #b4b4b4;
  background: #d7d7d7;
}

.page {
  position: relative;
  flex: none;
  width: 968px;
  height: 684px;
  background: #fff;
  box-shadow: 5px 5px 0 #969696;
}

.map {
  display: block;
  width: 100%;
  height: 100%;
}

.outline {
  fill: none;
  stroke: #444;
  stroke-width: 3;
  stroke-linejoin: round;
}

.wet {
  fill: #a8e0ef;
  stroke: #5aaede;
  stroke-width: 3;
  stroke-linejoin: round;
}

.wet .seam {
  fill: none;
}

.wet .shore {
  fill: none;
  stroke-width: 6;
}

.label {
  position: absolute;
  white-space: nowrap;
}

.title,
.subtitle {
  left: 0;
  width: 860px;
  text-align: center;
  font-family: "DejaVu Sans Mono", monospace;
  font-weight: 700;
}

.title {
  top: 12px;
  font-size: 31px;
  line-height: 40px;
}

.subtitle {
  top: 58px;
  font-size: 21px;
  line-height: 28px;
}

.created,
.source {
  font: 14px/18px "Open Sans", "Noto Sans CJK SC", sans-serif;
}

.created {
  top: 656px;
  left: 783px;
}

.source {
  top: 629px;
  left: 7px;
  width: 260px;
  height: 55px;
  padding-top: 9px;
}

.handles {
  position: absolute;
  inset: 0;
  width: 260px;
  height: 55px;
  overflow: visible;
  fill: none;
  stroke: #3b8fc7;
  shape-rendering: crispEdges;
}

.handles .dash {
  stroke: #5a0838;
  stroke-dasharray: 4 2;
}

.split-v {
  align-self: center;
  margin: 0 0 0 1px;
  width: 3px;
}

.docks {
  display: flex;
  flex: none;
  flex-direction: column;
  width: 392px;
  padding-left: 2px;
}

.tabs {
  display: flex;
  align-items: flex-end;
  height: 24px;
  padding-top: 1px;
  border-bottom: 1px solid #b4b4b4;
}

.tab {
  height: 21px;
  padding: 1px 11px 0;
  border: 1px solid #b4b4b4;
  border-bottom: 0;
  border-left-width: 0;
  border-radius: 3px 3px 0 0;
  background: linear-gradient(#e0e0e0, #d8d8d8);
}

.tab:first-child {
  border-left-width: 1px;
}

.tab.on {
  height: 24px;
  margin-bottom: -1px;
  border-left-width: 1px;
  background: linear-gradient(#fcfcfc, #efefef);
}

.dock-title {
  display: flex;
  align-items: center;
  justify-content: space-between;
  height: 20px;
  padding: 1px 2px 0 4px;
  font-family: "Open Sans", "Noto Sans CJK SC", sans-serif;
}

.dock-btns {
  display: flex;
  gap: 2px;
}

.dock-btns button {
  display: flex;
}

.dock-btns svg {
  width: 12px;
  height: 12px;
  fill: none;
  stroke: #666;
}

.dock-btns .thick {
  stroke-width: 2;
}

.tree {
  height: 290px;
  border: 1px solid #b4b4b4;
  background: #fff;
  font-family: "Noto Sans", "Noto Sans CJK SC", sans-serif;
}

.tree table {
  width: 100%;
  border-collapse: collapse;
  table-layout: fixed;
}

.tree th {
  height: 20px;
  padding: 0 2px;
  border-right: 1px solid #ccc;
  border-bottom: 1px solid #b4b4b4;
  background: linear-gradient(#fdfdfd, #ededed);
  font-weight: 400;
  text-align: left;
}

.tree th:last-child {
  border-right: 0;
}

.tree .narrow {
  width: 36px;
}

.head-icon {
  display: block;
  width: 16px;
  height: 16px;
}

.tree td {
  height: 19px;
  padding: 0 3px;
}

.check {
  display: block;
  flex: none;
  width: 14px;
  height: 14px;
  border: 1px solid #b9b9b9;
  background: #fff;
  appearance: none;
}

.check:checked::after {
  content: "";
  display: block;
  width: 12px;
  height: 12px;
  background: #111;
  clip-path: polygon(16% 50%, 32% 46%, 44% 66%, 70% 12%, 88% 12%, 54% 90%, 38% 90%);
}

.item-name {
  display: flex;
  align-items: center;
  gap: 7px;
  padding-left: 1px;
  white-space: nowrap;
}

.item-name svg {
  flex: none;
  width: 14px;
  height: 13px;
}

.current span {
  font-weight: 700;
}

.grip.split-h {
  align-self: center;
  height: 3px;
  margin: 1px 0;
}

.props {
  display: flex;
  flex: 1;
  flex-direction: column;
  min-height: 0;
}

.caption {
  margin: 0;
  padding-left: 4px;
  background: #c5c5c5;
  font-size: 13px;
  line-height: 16px;
}

.scroll {
  display: flex;
  flex: 1;
  min-height: 0;
  border: 1px solid #b4b4b4;
}

.form {
  flex: 1;
  overflow: hidden;
  padding: 9px 11px 0 12px;
}

.fold {
  display: flex;
  align-items: center;
  gap: 8px;
  height: 20px;
  margin-left: 1px;
  font-size: 13px;
  font-weight: 700;
}

.fold::before {
  content: "";
  width: 7px;
  height: 12px;
  margin: 0 2px 0 3px;
  background: #333;
  clip-path: polygon(0 0, 100% 50%, 0 100%);
}

.fold.open::before {
  width: 12px;
  height: 7px;
  margin: 0;
  clip-path: polygon(0 0, 100% 0, 50% 100%);
}

.box {
  position: relative;
  display: flex;
  flex-direction: column;
  gap: 8px;
  margin-bottom: 4px;
  padding: 12px 13px 13px 12px;
  border: 1px solid #d6d6d6;
  border-radius: 2px;
  background: #ececec;
}

.box textarea {
  height: 150px;
  padding: 3px;
  border: 1px solid #b4b4b4;
  background: #fff;
  font: 12px/14px "DejaVu Serif", "Noto Sans CJK SC", serif;
  resize: none;
}

.mark {
  position: absolute;
  top: 9px;
  left: 4px;
  width: 236px;
  height: 44px;
  border: 3px solid #ee1c25;
}

.tick {
  display: flex;
  align-items: center;
  gap: 5px;
  height: 14px;
}

.push {
  height: 20px;
  border: 1px solid #aaa;
  border-radius: 3px;
  background: linear-gradient(#fff, #ececec);
}

.look {
  gap: 6px;
  padding-bottom: 16px;
}

.line {
  line-height: 15px;
}

.split {
  display: flex;
}

.split .push {
  height: 22px;
}

.split .arrow {
  display: flex;
  align-items: center;
  justify-content: center;
  width: 12px;
}

.font .push {
  height: 25px;
}

.font .push:first-child {
  flex: 1;
  padding-left: 6px;
  font-size: 16px;
  text-align: left;
}

.row {
  display: flex;
  align-items: center;
  gap: 6px;
}

.row:not(.color) {
  padding-top: 1px;
}

.swatch {
  width: 108px;
  padding: 2px 4px;
}

.swatch i {
  display: block;
  height: 16px;
  border-radius: 3px;
  background: #000;
}

.spin {
  display: flex;
  flex: 1;
  height: 20px;
  border: 1px solid #aaa;
  border-radius: 3px;
  background: #fff;
}

.spin input {
  flex: 1;
  min-width: 0;
  padding-left: 3px;
}

.spin span {
  display: flex;
  flex-direction: column;
  width: 14px;
  border-left: 1px solid #bbb;
  background: #f6f6f6;
}

.spin button {
  display: flex;
  flex: 1;
  align-items: center;
  justify-content: center;
}

.radios {
  display: flex;
  gap: 11px;
}

.radios label {
  display: flex;
  align-items: center;
  gap: 6px;
}

.radios input {
  width: 14px;
  height: 14px;
  border: 1px solid #aaa;
  border-radius: 50%;
  background: #fff;
  appearance: none;
}

.radios input:checked {
  background: radial-gradient(#333 0 3px, #fff 4px);
}

.folded {
  display: flex;
  align-items: center;
  height: 20px;
  margin-bottom: 4px;
  font-size: 13px;
  font-weight: 700;
}

.folded .fold {
  width: 18px;
}

.folded span {
  margin-left: 2px;
}

.folded label {
  display: flex;
  align-items: center;
  gap: 9px;
}

.vbar {
  display: flex;
  flex-direction: column;
  width: 14px;
  border-left: 1px solid #b4b4b4;
}

.vbar button {
  display: flex;
  align-items: center;
  justify-content: center;
  height: 14px;
  background: #fafafa;
}

.thumb {
  flex: 1;
  border: solid #b4b4b4;
  border-width: 1px 0;
  background: #fcfcfc;
}

.groove {
  height: 44px;
  border-bottom: 1px solid #b4b4b4;
  background: #e2e2e2;
}

.status {
  position: relative;
  display: flex;
  flex: none;
  align-items: center;
  height: 27px;
  padding: 0 2px 0 6px;
}

.hint {
  flex: 1;
}

.coords {
  margin-right: 76px;
  white-space: nowrap;
}

/* digits keep the half-width cell of the status font */
.coords b {
  font: 10px/16px "Liberation Mono", monospace;
}

.zoom-combo {
  width: 113px;
  height: 22px;
}

.slider {
  width: 98px;
  height: 16px;
  margin-left: 7px;
  appearance: none;
}

.slider::-webkit-slider-runnable-track {
  height: 5px;
  border: 1px solid #aaa;
  border-radius: 3px;
  background: linear-gradient(90deg, #1c86e0 10%, #ccc 10%);
}

.slider::-webkit-slider-thumb {
  width: 13px;
  height: 13px;
  margin-top: -5px;
  border: 1px solid #aaa;
  border-radius: 4px;
  background: #fafafa;
  appearance: none;
}

.watermark {
  position: absolute;
  right: 9px;
  top: 0;
  color: rgba(255, 255, 255, 0.7);
  font: 15px/18px "Open Sans", sans-serif;
  text-shadow: 0 0 1px rgba(120, 120, 120, 0.6);
  pointer-events: none;
}
</style>
